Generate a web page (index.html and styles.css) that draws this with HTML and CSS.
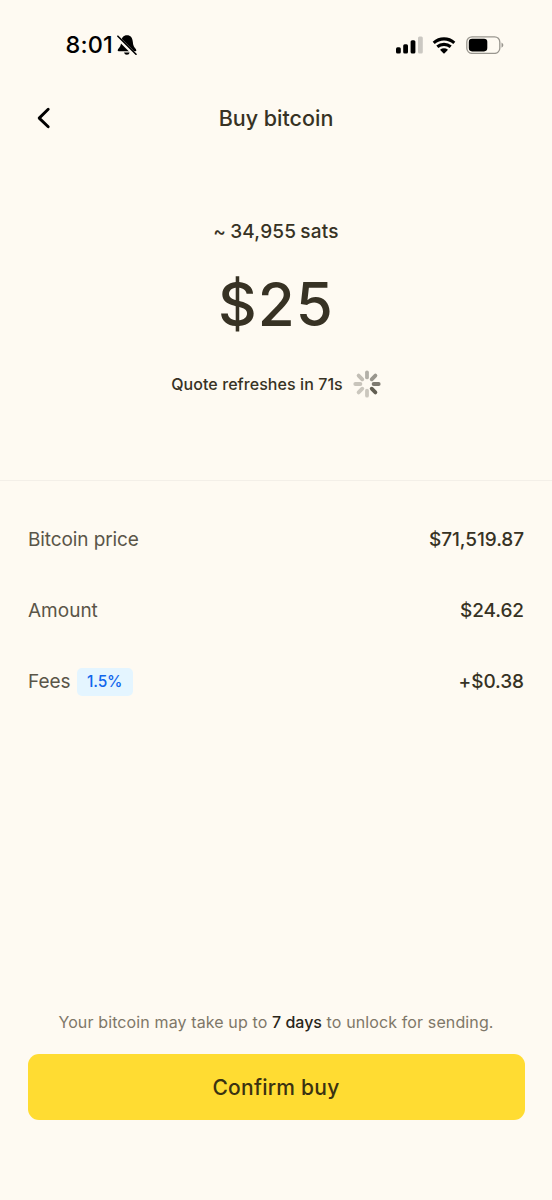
FILE: index.html
```html
<!DOCTYPE html>
<html lang="en">
<head>
<meta charset="utf-8">
<title>Buy bitcoin</title>
<link rel="stylesheet" href="styles.css">
</head>
<body>
<div class="screen">
  <div class="status">
    <div class="clock">
      <span class="time">8:01</span>
      <svg class="bell" viewBox="0 0 20 20" width="20" height="20">
        <path d="M10 .3C6.400.3 4.400 3 4.200 6.800 4 10.600 2.800 12.300 1 14.200Q0 16 1.600 16.200H18.400Q20 16 19 14.200C17.200 12.300 16 10.600 15.800 6.800 15.600 3 13.600.3 10 .3ZM7 17.400H12.700Q12.200 19.700 9.900 19.700T7 17.400Z" fill="#000"/>
        <path d="M0 1.800 18.200 20" stroke="#fefaf2" stroke-width="3.800"/>
        <path d="M.9 1.200 19 19.200" stroke="#000" stroke-width="1.600" stroke-linecap="round"/>
      </svg>
    </div>
    <div class="indicators">
      <svg viewBox="0 0 28 18" width="28" height="18">
        <rect x="0" y="11.300" width="4.800" height="6.300" rx="1.500"/>
        <rect x="7.200" y="8.300" width="4.800" height="9.300" rx="1.500"/>
        <rect x="14.600" y="4.300" width="4.800" height="13.300" rx="1.500"/>
        <rect x="22" y=".5" width="4.800" height="17.100" rx="1.500" fill="#cbc8c2"/>
      </svg>
      <svg class="wifi" viewBox="0 0 24 17" width="24" height="17">
        <path d="M1.700 5.800Q6.200 1.900 12 1.900T22.300 5.800M5.300 9.800Q8.200 7.400 12 7.400T18.700 9.800" fill="none" stroke="#000" stroke-width="3.100"/>
        <path d="M8 12.800Q12 9.900 16 12.800L12.600 16.200Q12 16.700 11.400 16.200Z"/>
      </svg>
      <svg class="battery" viewBox="0 0 38 18" width="38" height="18">
        <rect x=".8" y=".8" width="33" height="16.600" rx="5.200" fill="none" stroke="#99968f" stroke-width="1.300"/>
        <rect x="2.800" y="2.800" width="18.500" height="12.600" rx="3.300"/>
        <path d="M35.500 6.400Q37.400 7.500 37.400 9.100T35.500 11.800Z" fill="#99968f"/>
      </svg>
    </div>
  </div>
  <header class="nav">
    <svg class="back" viewBox="0 0 14 22" width="14" height="22"><path d="M11.200 2.300 2.200 11.100 11.200 19.800" fill="none" stroke="#000" stroke-width="2.900" stroke-linecap="round" stroke-linejoin="round"/></svg>
    <h1 class="title">Buy bitcoin</h1>
  </header>
  <section class="quote">
    <div class="sats">~ 34,955 sats</div>
    <div class="total">$25</div>
    <div class="refresh">
      <span class="refresh-text">Quote refreshes in 71s</span>
      <svg class="spinner" viewBox="-14 -14 28 28" width="28" height="28" fill="none" stroke-width="3.800" stroke-linecap="round">
        <path d="M0-6.600V-11.700" stroke="#b3b0a8"/>
        <path d="M4.700-4.700 8.400-8.400" stroke="#99968d"/>
        <path d="M6.600 0H11.700" stroke="#7e7a70"/>
        <path d="M4.700 4.700 8.400 8.400" stroke="#625e52"/>
        <path d="M0 6.600V11.700" stroke="#cbc7be"/>
        <path d="M-4.700 4.700-8.400 8.400" stroke="#cbc7be"/>
        <path d="M-6.600 0H-11.700" stroke="#c8c4bb"/>
        <path d="M-4.700-4.700-8.400-8.400" stroke="#c2beb5"/>
      </svg>
    </div>
  </section>
  <dl class="details">
    <div class="row"><dt class="label l-price">Bitcoin price</dt><dd class="value">$71,519.87</dd></div>
    <div class="row"><dt class="label">Amount</dt><dd class="value">$24.62</dd></div>
    <div class="row"><dt class="label">Fees<span class="badge">1.5%</span></dt><dd class="value">+$0.38</dd></div>
  </dl>
  <footer class="footer">
    <p class="note">Your bitcoin may take up to <strong>7 days</strong> to unlock for sending.</p>
    <button class="confirm" type="button">Confirm buy</button>
  </footer>
</div>
</body>
</html>
```
FILE: styles.css
```css
* { box-sizing: border-box; margin: 0; padding: 0; }
body { background: #fefaf2; color: #373224; font-family: Inter, "Liberation Sans", sans-serif; }
.screen { width: 552px; height: 1200px; display: flex; flex-direction: column; }
svg { display: block; flex: none; }
.status { height: 90px; padding: 0 48px 0 65.500px; display: flex; align-items: center; justify-content: space-between; }
.clock { display: flex; align-items: center; gap: 4.500px; color: #000; }
.time { padding-bottom: 1px; font-size: 23.500px; font-weight: 550; letter-spacing: .15px; }
.indicators { display: flex; align-items: center; }
.wifi { margin-left: 8px; }
.battery { margin-left: 10px; }
.nav { height: 56px; padding: 0 37px; display: grid; grid-template-columns: 14px 1fr 14px; align-items: center; }
.title { text-align: center; font-size: 21.500px; font-weight: 450; line-height: 28px; }
.quote { height: 335px; padding-top: 72px; display: flex; flex-direction: column; align-items: center; border-bottom: 1px solid #f3efe8; }
.sats { font-size: 19px; font-weight: 450; line-height: 28px; letter-spacing: .22px; word-spacing: -1.200px; }
.total { margin-top: 22px; font-size: 60px; font-weight: 500; line-height: 72px; letter-spacing: 1px; }
.refresh { margin-top: 30px; display: flex; align-items: center; gap: 10px; }
.refresh-text { font-size: 16px; font-weight: 450; letter-spacing: .07px; }
.details { padding: 22.400px 28px 0; }
.row { height: 71.400px; display: flex; align-items: center; justify-content: space-between; }
.label { display: flex; align-items: center; font-size: 19px; color: #5a5548; }
.l-price { letter-spacing: -.1px; }
.value { font-size: 19px; font-weight: 450; letter-spacing: -.08px; }
.badge { margin-left: 6px; width: 56px; height: 28px; display: grid; place-items: center; border-radius: 5px; background: #e4f5ff; color: #1166ec; font-size: 15.500px; font-weight: 500; letter-spacing: -.2px; }
.footer { margin-top: auto; padding: 0 27.500px 80px; }
.note { height: 24px; margin-bottom: 20px; text-align: center; white-space: nowrap; font-size: 16px; line-height: 24px; letter-spacing: .12px; color: #7e7768; }
.note strong { font-weight: 500; color: #292519; letter-spacing: 0; }
.confirm { display: block; width: 100%; height: 66px; border: 0; border-radius: 11px; background: #ffdc32; color: #3b3211; font: 450 21px Inter, "Liberation Sans", sans-serif; letter-spacing: .25px; }
```
